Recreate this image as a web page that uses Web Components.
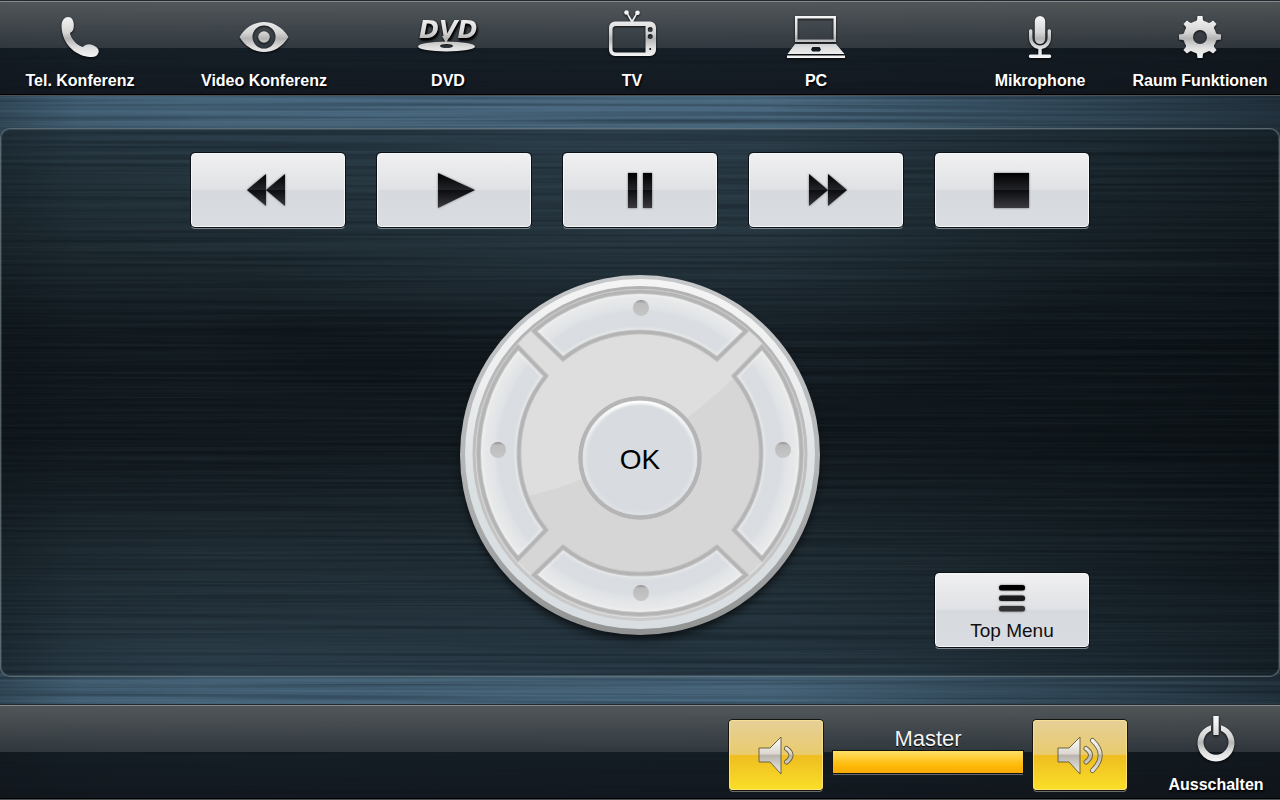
<!DOCTYPE html>
<html lang="de">
<head>
<meta charset="utf-8">
<title>Raumsteuerung – DVD</title>
<style>
  body { margin: 0; background: #10171d; font-family: "Liberation Sans", Arial, sans-serif; }
</style>
</head>
<body>
<room-screen>
  <room-bar slot="top">
    <bar-group class="wide">
      <bar-button icon="phone">Tel. Konferenz</bar-button>
      <bar-button icon="eye">Video Konferenz</bar-button>
      <bar-button icon="dvd">DVD</bar-button>
      <bar-button icon="tv">TV</bar-button>
      <bar-button icon="laptop">PC</bar-button>
    </bar-group>
    <bar-group slot="end">
      <bar-button icon="mic">Mikrophone</bar-button>
      <bar-button icon="gear">Raum Funktionen</bar-button>
    </bar-group>
  </room-bar>

  <dvd-panel>
    <media-button icon="rewind" label="Zurückspulen"></media-button>
    <media-button icon="play" label="Wiedergabe"></media-button>
    <media-button icon="pause" label="Pause"></media-button>
    <media-button icon="forward" label="Vorspulen"></media-button>
    <media-button icon="stop" label="Stopp"></media-button>
    <nav-dial slot="dial">OK</nav-dial>
    <media-button slot="menu" icon="menu">Top Menu</media-button>
  </dvd-panel>

  <room-bar slot="bottom">
    <volume-control slot="end">Master</volume-control>
    <bar-button slot="end" class="narrow" icon="power">Ausschalten</bar-button>
  </room-bar>
</room-screen>

<script>
const define = (name, html, setup) => {
  const template = document.createElement('template');
  template.innerHTML = html;
  customElements.define(name, class extends HTMLElement {
    constructor() {
      super();
      this.attachShadow({ mode: 'open' }).append(template.content.cloneNode(true));
    }
    connectedCallback() { if (setup) setup(this, this.shadowRoot); }
  });
};

/* Silver icons of the bars, drawn on a 64 x 56 field */
const barIcons = {
  phone: `<path d="M13.5 18C13.5 12 17 9 20 9C24 9 25.5 12.5 25.8 16C26 20 25.3 23.5 22 25C22.5 30 29 38 35 39C37 36.5 41 35.5 44.5 37C49 39 51.5 41 50.5 44.5C49.5 48 47 49.3 42 49C30 48.5 14 38 13.5 18Z"/>`,
  eye: `<path fill-rule="evenodd" d="M7.500 29C14 18 24 14 32 14S50 18 56.500 29C50 40 40 44 32 44S14 40 7.500 29ZM20.500 29a11.500 11.500 0 1 0 23 0a11.500 11.500 0 1 0 -23 0Z"/><circle cx="32" cy="29" r="5.800"/>`,
  dvd: `<text x="3" y="30" font-family="DejaVu Sans, sans-serif" font-weight="700" font-style="oblique" font-size="24">DVD</text><path d="M26 28H34L30 35Z"/><path fill-rule="evenodd" d="M2 38.500a28.500 5 0 1 0 57 0a28.500 5 0 1 0 -57 0ZM24 38a6.500 2 0 1 0 13 0a6.500 2 0 1 0 -13 0Z"/>`,
  tv: `<path fill-rule="evenodd" d="M15 13.500H50a6 6 0 0 1 6 6V42a6 6 0 0 1 -6 6H15a6 6 0 0 1 -6 -6V19.500a6 6 0 0 1 6 -6ZM16 18a3.500 3.500 0 0 0 -3.500 3.500V41a3.500 3.500 0 0 0 3.500 3.500H45.500V18ZM47.700 21.500a2.500 2.500 0 1 0 5 0a2.500 2.500 0 1 0 -5 0ZM47.700 28.500a2.500 2.500 0 1 0 5 0a2.500 2.500 0 1 0 -5 0ZM49.200 41a1 1 0 1 0 2 0a1 1 0 1 0 -2 0Z"/><circle cx="26.500" cy="4.500" r="2.300"/><circle cx="37.500" cy="4.700" r="2.300"/><path d="M26.500 5.500L27.500 4.500L32 12L36.500 4.500L37.500 5.500L33 14H31Z"/>`,
  laptop: `<path fill-rule="evenodd" d="M11 8H52V34H11ZM13.500 10.500V31.500H49.500V10.500Z"/><path fill-rule="evenodd" d="M11 36H52L60.500 46H3.500ZM28.500 39L27 41.500L28.500 43.500H35.500L37 41.500L35.500 39Z"/><path d="M3 47.500H61V50H3Z"/>`,
  mic: `<rect x="26.800" y="8" width="10.400" height="28" rx="5.200"/><path d="M21 23a1.700 1.700 0 0 1 3.400 0V30a7.600 7.600 0 0 0 15.200 0V23a1.700 1.700 0 0 1 3.400 0V30.500a11 11 0 0 1 -9.300 10.500V46.500H41.500a1.600 1.600 0 0 1 0 3.500H22.500a1.600 1.600 0 0 1 0 -3.500H30.300V41A11 11 0 0 1 21 30.500Z"/>`,
  gear: `<mask id="m"><g fill="#fff"><circle cx="32" cy="29" r="16.500"/>${[0, 45, 90, 135].map(a => `<path transform="rotate(${a} 32 29)" d="M29.500 8H34.500L35 12L38 16V42L35 46L34.500 50H29.500L29 46L26 42V16L29 12Z"/>`).join('')}</g><circle cx="32" cy="29" r="7" fill="#000"/></mask><rect width="64" height="56" mask="url(#m)"/>`,
  power: `<path d="M27 13.200V18.700A12.500 12.500 0 1 0 37 18.700V13.200A18.500 18.500 0 1 1 27 13.200Z"/><rect x="29.300" y="4" width="5.400" height="19"/>`
};

/* Black icons of the white keys, drawn on a 48 x 48 field */
const keyIcons = {
  rewind: `<path d="M3 24L22 8V40ZM22 24L41 8V40Z"/>`,
  play: `<path d="M8 7V42L45 24Z"/>`,
  pause: `<path d="M12 7H21V42H12ZM27 7H36V42H27Z"/>`,
  forward: `<path d="M7 8V40L26 24ZM26 8V40L45 24Z"/>`,
  stop: `<path d="M6 7H41V42H6Z"/>`,
  menu: `<rect x="11" y="5" width="26" height="5.500" rx="2.500" fill="#000"/><rect x="11" y="15.500" width="26" height="5.500" rx="2.500" fill="#1a1a1c"/><rect x="11" y="26" width="26" height="5.500" rx="2.500" fill="#333336"/>`
};

define('room-screen', `
  <style>
    :host { position: relative; display: flex; flex-direction: column; min-height: 100vh; overflow: hidden; isolation: isolate;
      background:
        linear-gradient(90deg, rgba(6,12,16,.3), rgba(6,12,16,.08) 6%, transparent 16%, transparent 60%, rgba(8,14,18,.42) 88%, rgba(8,12,16,.6)),
        radial-gradient(ellipse 34% 26% at 52% 27%, rgba(76,104,126,.5), transparent),
        radial-gradient(ellipse 30% 8% at 45% 43%, rgba(4,6,8,.5), transparent),
        linear-gradient(180deg, #42607a, #48677e 14%, #3c5461 22%, #32454f 31%, #1c262e 41%, #1a232a 55%, #31434e 69%, #3c5464 79%, #47657b 87%, #3a5666); }
    .grain { position: absolute; inset: 0; width: 100%; height: 100%; z-index: -1; }
    main { display: flex; flex: 1; margin: 32px 0 27px; }
    main ::slotted(*) { flex: 1; }
  </style>
  <svg class="grain" aria-hidden="true">
    <filter id="brush" x="0" y="0" width="100%" height="100%" color-interpolation-filters="sRGB">
      <feTurbulence type="fractalNoise" baseFrequency="0.003 0.4" numOctaves="2" seed="7"/>
      <feColorMatrix values="0 0 0 0 .4  0 0 0 0 .55  0 0 0 0 .62  1.500 0 0 0 -.6"/>
    </filter>
    <filter id="shade" x="0" y="0" width="100%" height="100%" color-interpolation-filters="sRGB">
      <feTurbulence type="fractalNoise" baseFrequency="0.002 0.3" numOctaves="2" seed="21"/>
      <feColorMatrix values="0 0 0 0 0  0 0 0 0 .02  0 0 0 0 .04  2 0 0 0 -.8"/>
    </filter>
    <rect width="100%" height="100%" filter="url(#brush)" opacity=".22"/>
    <rect width="100%" height="100%" filter="url(#shade)" opacity=".36"/>
  </svg>
  <slot name="top"></slot>
  <main><slot></slot></main>
  <slot name="bottom"></slot>`);

define('room-bar', `
  <style>
    :host { display: flex; justify-content: space-between; box-sizing: border-box; min-height: 96px;
      border-top: 1px solid #23292e; border-bottom: 1px solid #4b5053;
      box-shadow: inset 0 1px #83898d, inset 0 -1px #000;
      background: linear-gradient(180deg, rgba(83,87,89,.95), rgba(48,54,59,.92) 50%, rgba(14,20,25,.86) 50%, rgba(15,19,25,.92)); }
    .end { display: flex; margin-left: auto; }
  </style>
  <slot></slot><div class="end"><slot name="end"></slot></div>`);

define('bar-group', `
  <style>
    :host { display: flex; }
    :host(.wide) { gap: 24px; }
  </style><slot></slot>`);

define('bar-button', `
  <style>
    :host { display: block; width: 160px; }
    :host(.narrow) { width: 128px; }
    button { display: flex; flex-direction: column; align-items: center; gap: 7px; width: 100%; margin: 0; padding: 7px 0 0;
      border: 0; background: none; color: #fff; font: 700 16px/20px "Liberation Sans", Arial, sans-serif; white-space: nowrap;
      text-shadow: 1px 2px 2px #000; cursor: pointer; }
    svg { display: block; width: 64px; height: 56px; filter: drop-shadow(0 1px 1px rgba(0,0,0,.8)); }
  </style>
  <button type="button"><svg viewBox="0 0 64 56" aria-hidden="true"></svg><span><slot></slot></span></button>`,
  (host, root) => {
    root.querySelector('svg').innerHTML =
      `<linearGradient id="g" gradientUnits="userSpaceOnUse" x1="0" y1="8" x2="0" y2="50">
        <stop offset="0" stop-color="#f6f6f6"/><stop offset=".4" stop-color="#d4d4d4"/><stop offset=".54" stop-color="#b4b4b4"/>
        <stop offset=".75" stop-color="#dedede"/><stop offset="1" stop-color="#f6f6f6"/></linearGradient>
       <g fill="url(#g)">${barIcons[host.getAttribute('icon')]}</g>`;
  });

define('dvd-panel', `
  <style>
    :host { display: grid; grid-template-columns: repeat(5, minmax(0, 154px)); grid-template-rows: 74px 1fr; justify-content: center;
      gap: 48px 32px; box-sizing: border-box; padding: 24px 0 29px;
      border: 1px solid rgba(140,158,166,.55); border-radius: 10px; background: rgba(6,12,14,.42);
      box-shadow: inset 0 0 0 1px rgba(140,158,166,.22); }
    ::slotted([slot=dial]) { grid-area: 2 / 1 / 3 / -1; justify-self: center; align-self: start; margin-bottom: 12px; }
    ::slotted([slot=menu]) { grid-area: 2 / 5; align-self: end; }
  </style>
  <slot></slot><slot name="dial"></slot><slot name="menu"></slot>`);

define('media-button', `
  <style>
    :host { display: block; height: 74px; }
    button { display: flex; flex-direction: column; align-items: center; justify-content: center; width: 100%; height: 100%;
      margin: 0; padding: 0; border: 1px solid #f6f7f7; border-radius: 4px; color: #101010; cursor: pointer;
      font: 19px/24px "Liberation Sans", Arial, sans-serif;
      background: linear-gradient(180deg, #f0f0f1, #dfe1e4 50%, #d6dade 50%, #d9dce0);
      box-shadow: 0 0 0 1px #0b1116, 0 2px 0 #7d868b; }
    svg { display: block; flex: none; width: 48px; height: 48px; filter: drop-shadow(0 0 1px rgba(0,0,0,.5)); }
    span { display: none; }
    :host([icon=menu]) button { justify-content: flex-start; padding-top: 6px; }
    :host([icon=menu]) svg { margin-bottom: -9px; }
    :host([icon=menu]) span { display: block; }
  </style>
  <button type="button"><svg viewBox="0 0 48 48" aria-hidden="true"></svg><span><slot></slot></span></button>`,
  (host, root) => {
    root.querySelector('svg').innerHTML =
      `<linearGradient id="g" gradientUnits="userSpaceOnUse" x1="0" y1="7" x2="0" y2="42">
        <stop offset="0" stop-color="#000"/><stop offset=".5" stop-color="#24252a"/>
        <stop offset=".5" stop-color="#0c0d10"/><stop offset="1" stop-color="#3b3b3f"/></linearGradient>
       <g fill="url(#g)">${keyIcons[host.getAttribute('icon')]}</g>`;
    if (host.hasAttribute('label')) root.querySelector('button').setAttribute('aria-label', host.getAttribute('label'));
  });

define('nav-dial', `
  <style>
    :host { display: grid; grid-template: 121px 122px 1fr / 1fr 122px 1fr; width: 360px; height: 360px; }
    svg { grid-area: 1 / 1 / -1 / -1; width: 360px; height: 360px; overflow: visible; }
    button { margin: 0; padding: 0; border: 0; background: none; border-radius: 12px; cursor: pointer; z-index: 1; }
    .up { grid-area: 1 / 2; } .left { grid-area: 2 / 1; } .right { grid-area: 2 / 3; } .down { grid-area: 3 / 2; }
    .ok { grid-area: 2 / 2; border-radius: 50%; padding-top: 5px; color: #000; font: 28px/32px "Liberation Sans", Arial, sans-serif; }
  </style>
  <svg viewBox="0 0 360 360" aria-hidden="true">
    <defs>
      <linearGradient id="edge" x2="0" y2="1"><stop offset="0" stop-color="#c6c8ca"/><stop offset=".5" stop-color="#b4b6b8"/><stop offset="1" stop-color="#929494"/></linearGradient>
      <linearGradient id="rim" x2="0" y2="1"><stop offset="0" stop-color="#f4f4f4"/><stop offset=".3" stop-color="#eceeef"/><stop offset=".6" stop-color="#dadfe2"/><stop offset="1" stop-color="#d8dee1"/></linearGradient>
      <radialGradient id="seg" gradientUnits="userSpaceOnUse" cx="180" cy="178" r="163">
        <stop offset=".76" stop-color="#d9dde1"/><stop offset=".87" stop-color="#dadee2"/><stop offset=".89" stop-color="#e0e3e6"/><stop offset=".96" stop-color="#e8e9ea"/><stop offset="1" stop-color="#ededed"/></radialGradient>
      <linearGradient id="ring" x2="0" y2="1"><stop offset="0" stop-color="#b2b2b2"/><stop offset="1" stop-color="#cbcbcb"/></linearGradient>
      <linearGradient id="shine" x2="0" y2="1"><stop offset="0" stop-color="#fff"/><stop offset=".4" stop-color="#fff" stop-opacity=".3"/><stop offset="1" stop-color="#eee" stop-opacity=".2"/></linearGradient>
      <linearGradient id="dot" x2="0" y2="1"><stop offset="0" stop-color="#8d8d8d"/><stop offset=".2" stop-color="#bcbcbc"/><stop offset="1" stop-color="#c6c6c6"/></linearGradient>
      <clipPath id="disc"><circle cx="180" cy="178" r="163"/></clipPath>
      <filter id="s1"><feGaussianBlur stdDeviation="1"/></filter>
      <filter id="s5" x="-10%" y="-10%" width="120%" height="120%"><feGaussianBlur stdDeviation="5"/></filter>
      <path id="wedge" d="M74 56A162 162 0 0 1 286 56L257 84A123 123 0 0 0 103 84Z"/>
      <clipPath id="wedgeclip"><use href="#wedge"/></clipPath>
      <g id="part">
        <use href="#wedge" fill="url(#seg)"/>
        <g clip-path="url(#wedgeclip)"><use href="#wedge" fill="none" stroke="#f2f3f3" stroke-width="9" filter="url(#s1)" opacity=".5"/></g>
        <use href="#wedge" fill="none" stroke="#c6c6c6" stroke-width="5"/>
        <use href="#wedge" fill="none" stroke="#b4b4b4" stroke-width="3"/>
      </g>
    </defs>
    <circle cx="180" cy="186" r="178" fill="#000" opacity=".7" filter="url(#s5)"/>
    <circle cx="180" cy="180" r="180" fill="url(#edge)"/>
    <circle cx="180" cy="179" r="175" fill="url(#rim)"/>
    <circle cx="180" cy="179" r="167" fill="#dedede"/>
    <g clip-path="url(#disc)"><path d="M40 226Q185 205 310 65L370 100V370H40Z" fill="#d6d6d6"/></g>
    <circle cx="180" cy="178.500" r="166" fill="none" stroke="url(#ring)" stroke-width="3"/>
    <use href="#part"/>
    <use href="#part" transform="rotate(90 180 178)"/>
    <use href="#part" transform="rotate(180 180 178)"/>
    <use href="#part" transform="rotate(270 180 178)"/>
    <g fill="url(#dot)"><circle cx="181" cy="33" r="8"/><circle cx="38" cy="175" r="8"/><circle cx="323" cy="175" r="8"/><circle cx="181" cy="318" r="8"/></g>
    <circle cx="180" cy="183" r="61.500" fill="#b5b5b5"/>
    <circle cx="180" cy="183" r="57.500" fill="#d8dce1"/>
    <circle cx="180" cy="183" r="56" fill="none" stroke="url(#shine)" stroke-width="4" filter="url(#s1)"/>
    <circle cx="180" cy="183" r="59.500" fill="none" stroke="#b5b5b5" stroke-width="4"/>
  </svg>
  <button class="up" type="button" aria-label="Hoch"></button>
  <button class="left" type="button" aria-label="Links"></button>
  <button class="ok" type="button"><slot></slot></button>
  <button class="right" type="button" aria-label="Rechts"></button>
  <button class="down" type="button" aria-label="Runter"></button>`);

const speaker = (x, waves) => `
  <svg viewBox="0 0 94 70" aria-hidden="true">
    <linearGradient id="g" gradientUnits="userSpaceOnUse" x1="0" y1="17" x2="0" y2="54">
      <stop offset="0" stop-color="#fff"/><stop offset=".45" stop-color="#dcd8d0"/><stop offset=".5" stop-color="#b9b5ae"/><stop offset="1" stop-color="#ecebe6"/></linearGradient>
    <path d="M${x} 28H${x + 11}L${x + 22} 17V54L${x + 11} 42H${x}Z" fill="url(#g)" stroke="#6d6240"/>
    ${waves.map(d => `<path d="${d}" fill="none" stroke="#6d6240" stroke-width="5" stroke-linecap="round"/><path d="${d}" fill="none" stroke="url(#g)" stroke-width="3.200" stroke-linecap="round"/>`).join('')}
  </svg>`;

define('volume-control', `
  <style>
    :host { display: flex; align-items: flex-start; gap: 10px; padding: 15px 25px 0 0; }
    button { width: 94px; height: 70px; margin: 0; padding: 0; border: 0; border-radius: 4px; cursor: pointer;
      background: linear-gradient(180deg, #e5cf98, #e9cb6c 50%, #efbd20 50%, #f9df28);
      box-shadow: inset 0 0 0 1px rgba(255,232,150,.7), 0 0 0 1px #14130e, 0 2px 0 #6d6d68; }
    svg { display: block; width: 94px; height: 70px; }
    .level { display: flex; flex-direction: column; width: 190px; padding-top: 7px; }
    label { color: #f4f4f4; font-size: 22px; line-height: 24px; text-align: center; text-shadow: 0 1px 1px #000; }
    progress { display: block; width: 100%; height: 22px; border: 0; appearance: none; -webkit-appearance: none; background: #1a1a1a;
      box-shadow: 0 0 0 1px #15130f, 0 2px 0 #62676a; }
    progress::-webkit-progress-bar { background: #1a1a1a; }
    progress::-webkit-progress-value { background: linear-gradient(180deg, #ffe067, #fdc21c 50%, #fdb804 70%, #f9a90c); }
  </style>
  <button type="button" aria-label="Leiser">${speaker(30, ['M57.500 28.500Q66.500 35 57.500 42'])}</button>
  <div class="level"><label for="level"><slot></slot></label><progress id="level" max="100" value="100"></progress></div>
  <button type="button" aria-label="Lauter">${speaker(25, ['M53 28.500Q62 35 53 42', 'M59.500 20.500Q75 35 59.500 50.500'])}</button>`);
</script>
</body>
</html>
